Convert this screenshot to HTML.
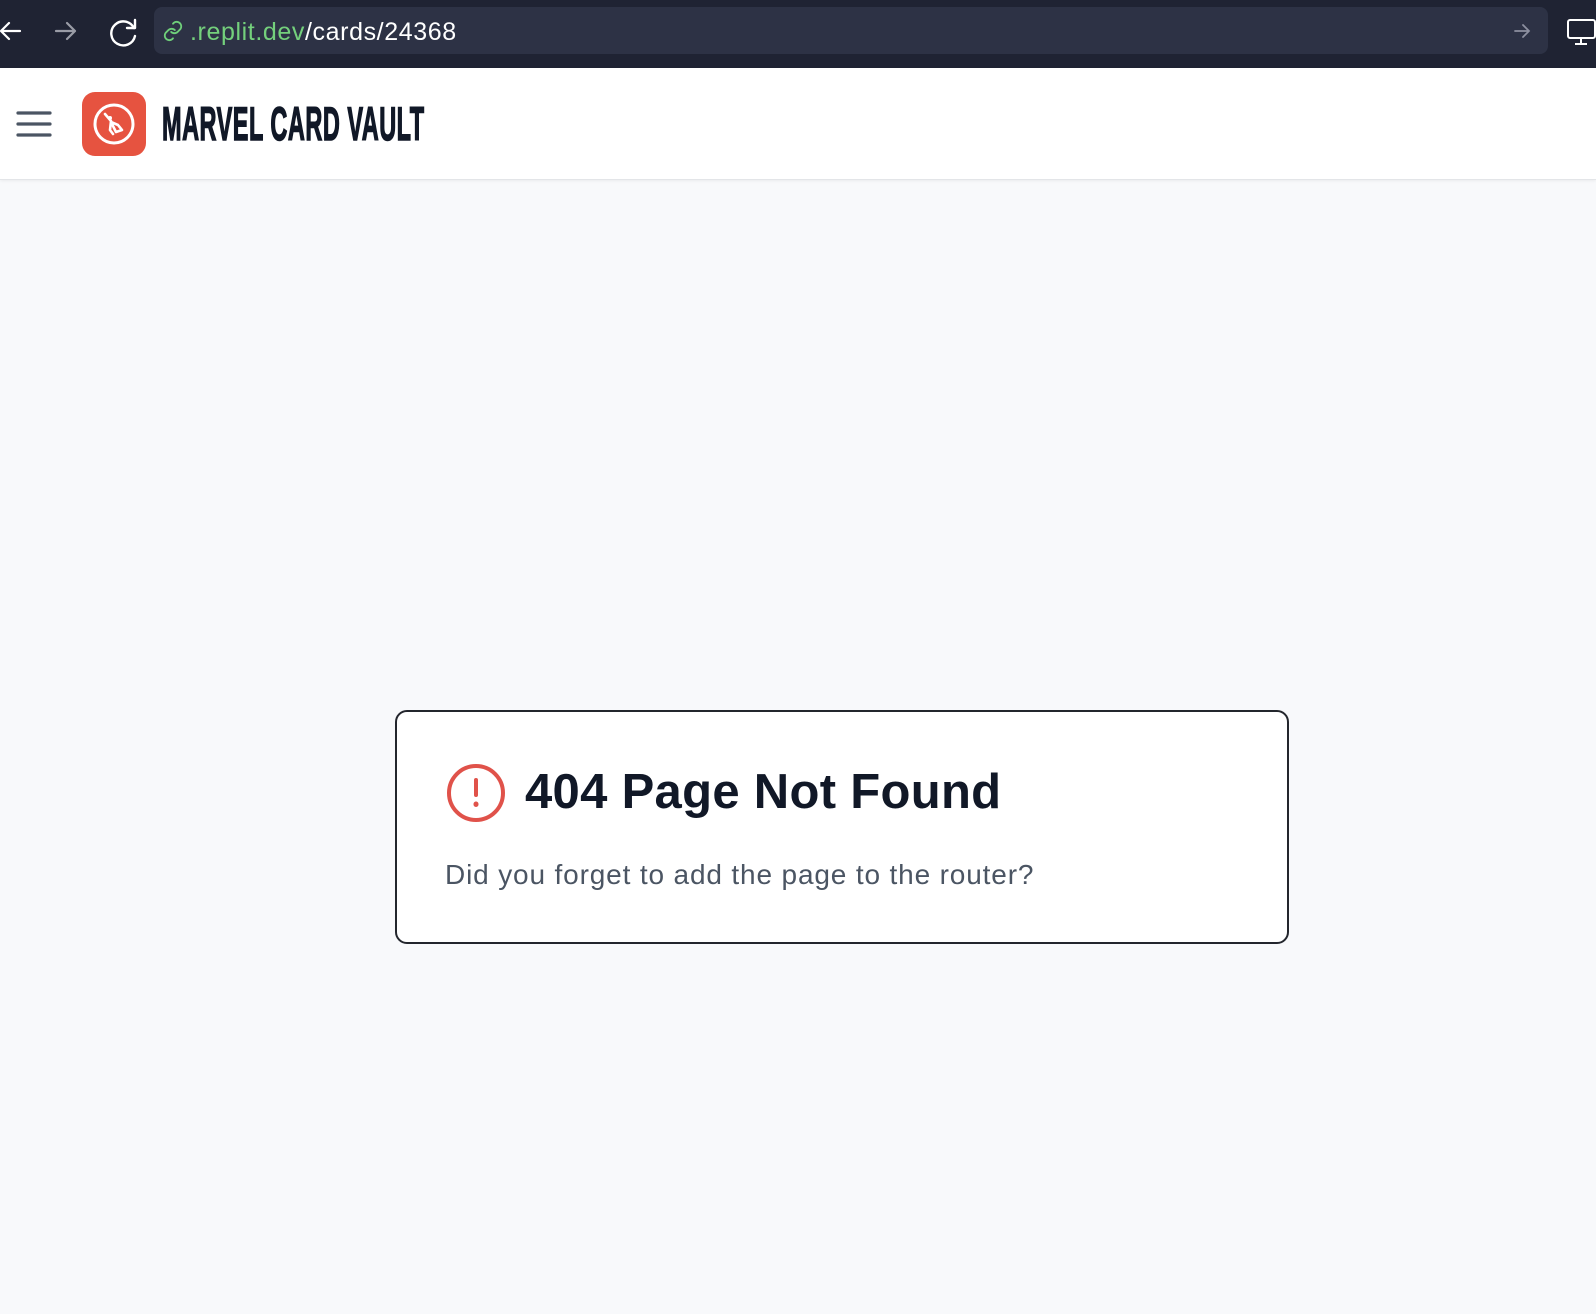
<!DOCTYPE html>
<html><head><meta charset="utf-8"><style>
*{margin:0;padding:0;box-sizing:border-box}
body{width:1596px;height:1314px;background:#f8f9fb;font-family:"Liberation Sans",sans-serif;position:relative;overflow:hidden}
.top{position:absolute;left:0;top:0;width:1596px;height:68px;background:#1f2333}
.url{position:absolute;left:154px;top:7px;width:1394px;height:47px;background:#2d3245;border-radius:8px}
.urltxt{position:absolute;left:36px;top:11px;font-size:25px;color:#fff;white-space:nowrap;letter-spacing:0.6px}
.hdr{position:absolute;left:0;top:68px;width:1596px;height:112px;background:#fff;border-bottom:1px solid #e3e5e8;box-shadow:0 1px 3px rgba(0,0,0,.06)}
.logo{position:absolute;left:82px;top:24px;width:64px;height:64px;border-radius:13px;background:#e65340}
.title{position:absolute;left:162px;top:28px;font-size:47px;font-weight:bold;color:#111827;transform:scaleX(0.5);transform-origin:left top;white-space:nowrap;letter-spacing:1px;-webkit-text-stroke:1.5px #111827}
.box{position:absolute;left:395px;top:710px;width:894px;height:234px;background:#fff;border:2px solid #23262d;border-radius:12px}
.h{position:absolute;left:128px;top:52px;font-size:49px;font-weight:bold;color:#111827;white-space:nowrap;letter-spacing:0.3px}
.p{position:absolute;left:48px;top:147px;font-size:28px;color:#4b5563;white-space:nowrap;letter-spacing:0.85px}
</style></head><body>
<div class="top">
<svg style="position:absolute;left:0;top:18px" width="160" height="30" viewBox="0 0 160 30" fill="none" stroke-linecap="round" stroke-linejoin="round">
<path d="M20 13H2M9 5L1 13L9 21" stroke="#fff" stroke-width="2.2"/>
<path d="M56 13H75M67 5L75 13L67 21" stroke="#9a9ca6" stroke-width="2.2"/>
<path d="M134 10A12 12 0 1 0 135 18" stroke="#fff" stroke-width="2.4"/>
<path d="M135 2V10H127" stroke="#fff" stroke-width="2.4"/>
</svg>
<div class="url">
<svg style="position:absolute;left:8px;top:13px" width="22" height="22" viewBox="0 0 24 24" fill="none" stroke="#6fcf7a" stroke-width="2" stroke-linecap="round"><path d="M10 13a5 5 0 0 0 7 0l3-3a5 5 0 0 0-7-7l-1 1"/><path d="M14 11a5 5 0 0 0-7 0l-3 3a5 5 0 0 0 7 7l1-1"/></svg>
<div class="urltxt"><span style="color:#74d07c">.replit.dev</span>/cards/24368</div>
<svg style="position:absolute;right:16px;top:14px" width="20" height="20" viewBox="0 0 20 20" fill="none" stroke="#8d90a0" stroke-width="1.8" stroke-linecap="round"><path d="M3 10H17M11 4L17 10L11 16"/></svg>
</div>
<svg style="position:absolute;left:1566px;top:18px" width="30" height="28" viewBox="0 0 30 28" fill="none" stroke="#fff" stroke-width="2"><rect x="2" y="2" width="27" height="18" rx="2"/><path d="M15 20V26M9 26H21"/></svg>
</div>
<div class="hdr">
<svg style="position:absolute;left:16px;top:42px" width="36" height="28" viewBox="0 0 36 28"><g stroke="#4b5563" stroke-width="3.2" stroke-linecap="round"><path d="M2 3H34M2 14H34M2 25H34"/></g></svg>
<div class="logo"><svg width="64" height="64" viewBox="0 0 64 64" fill="none" stroke="#fff" stroke-linecap="round" stroke-linejoin="round"><circle cx="32" cy="32" r="19" stroke-width="3"/><path d="M23 22L29 29L28 38L31 42M29 30L36 33L40 38L34 40Z" stroke-width="2.6"/><circle cx="28" cy="26" r="2" fill="#fff" stroke="none"/></svg></div>
<div class="title">MARVEL CARD VAULT</div>
</div>
<div class="box">
<svg style="position:absolute;left:48px;top:50px" width="62" height="62" viewBox="0 0 62 62" fill="none" stroke="#e0524a" stroke-width="4" stroke-linecap="round"><circle cx="31" cy="31" r="27"/><path d="M31 18V33"/><path d="M31 42V42.5" stroke-width="5"/></svg>
<div class="h">404 Page Not Found</div>
<div class="p">Did you forget to add the page to the router?</div>
</div>
</body></html>
